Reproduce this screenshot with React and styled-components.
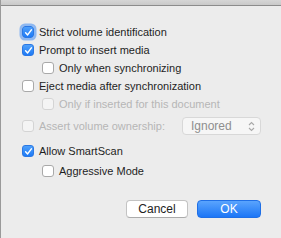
import React, { useState } from 'react';
import styled, { createGlobalStyle, css } from 'styled-components';

const Global = createGlobalStyle`
  html, body {
    margin: 0;
    padding: 0;
    background: #ececec;
  }
  body {
    font-family: "Liberation Sans", Arial, sans-serif;
    font-size: 11px;
    color: #1e1e1e;
  }
`;

const Sheet = styled.div`
  width: 281px;
  height: 238px;
  box-sizing: border-box;
  background: #ececec;
  border-left: 1px solid #9a9a9a;
  display: flex;
  flex-direction: column;
  overflow: hidden;
`;

const TitleStrip = styled.div`
  height: 5px;
  background: linear-gradient(#d6d6d6, #c9c9c9);
  border-bottom: 1px solid #8c8c8c;
  flex-shrink: 0;
`;

const Body = styled.div`
  display: flex;
  flex-direction: column;
  padding: 17px 20px 0 21px;
  flex: 1;
`;

const Row = styled.label`
  display: flex;
  align-items: center;
  height: 18px;
  gap: 5px;
  padding-left: ${p => (p.$indent ? 20 : 0)}px;
  color: ${p => (p.$disabled ? '#b6b6b6' : '#1e1e1e')};
  margin-top: ${p => p.$gap || 0}px;
  white-space: nowrap;
`;

const Box = styled.span`
  width: 12px;
  height: 12px;
  box-sizing: border-box;
  border-radius: 3px;
  flex-shrink: 0;
  display: flex;
  align-items: center;
  justify-content: center;
  ${p =>
    p.$checked
      ? css`
          background: linear-gradient(#4ea0fb, #1e7af5);
          border: 1px solid #2b78e4;
        `
      : css`
          background: ${p.$disabled ? '#f4f4f4' : '#ffffff'};
          border: 1px solid ${p.$disabled ? '#d4d4d4' : '#a9a9a9'};
        `}
  ${p =>
    p.$focus &&
    css`
      box-shadow: 0 0 0 2.5px rgba(80, 150, 245, 0.6);
    `}
`;

const Check = () => (
  <svg width="9" height="9" viewBox="0 0 9 9">
    <path
      d="M1.6 4.8 L3.6 6.9 L7.4 1.9"
      fill="none"
      stroke="#ffffff"
      strokeWidth="1.5"
      strokeLinecap="round"
      strokeLinejoin="round"
    />
  </svg>
);

const SelectBox = styled.div`
  margin-left: auto;
  width: 79px;
  height: 18px;
  box-sizing: border-box;
  border: 1px solid #d8d8d8;
  border-radius: 4px;
  background: #f6f6f6;
  display: flex;
  align-items: center;
  justify-content: space-between;
  padding: 0 5px 0 8px;
  color: #8e8e8e;
  font-size: 12px;
`;

const Footer = styled.div`
  display: flex;
  justify-content: flex-end;
  gap: 9px;
  margin-top: 20px;
`;

const Button = styled.button`
  font-family: inherit;
  font-size: 12px;
  height: 18px;
  box-sizing: border-box;
  border-radius: 4px;
  padding: 0;
  display: flex;
  align-items: center;
  justify-content: center;
  ${p =>
    p.$primary
      ? css`
          width: 64px;
          border: 1px solid #1f6fe6;
          background: linear-gradient(#5aa4fd, #1c76f6);
          color: #ffffff;
        `
      : css`
          width: 62px;
          border: 1px solid #c3c3c3;
          border-bottom-color: #ababab;
          background: #ffffff;
          color: #1e1e1e;
        `}
`;

function Checkbox({ label, checked, disabled, indent, focus, gap, onToggle }) {
  return (
    <Row $indent={indent} $disabled={disabled} $gap={gap} onClick={disabled ? undefined : onToggle}>
      <Box $checked={checked} $disabled={disabled} $focus={focus}>
        {checked && <Check />}
      </Box>
      {label}
    </Row>
  );
}

export default function App() {
  const [v, setV] = useState({
    strict: true,
    prompt: true,
    onlySync: false,
    eject: false,
    onlyDoc: false,
    smart: true,
    aggressive: false,
  });
  const t = k => () => setV(s => ({ ...s, [k]: !s[k] }));

  return (
    <Sheet>
      <Global />
      <TitleStrip />
      <Body>
        <Checkbox label="Strict volume identification" checked={v.strict} focus onToggle={t('strict')} />
        <Checkbox label="Prompt to insert media" checked={v.prompt} onToggle={t('prompt')} />
        <Checkbox label="Only when synchronizing" indent checked={v.onlySync} onToggle={t('onlySync')} />
        <Checkbox label="Eject media after synchronization" checked={v.eject} onToggle={t('eject')} />
        <Checkbox label="Only if inserted for this document" indent disabled checked={v.onlyDoc} />
        <Row $disabled $gap={4}>
          <Box $disabled />
          Assert volume ownership:
          <SelectBox>
            <span>Ignored</span>
            <svg width="7" height="11" viewBox="0 0 7 11">
              <path d="M1 4 L3.5 1.5 L6 4 M1 7 L3.5 9.5 L6 7" fill="none" stroke="#a8a8a8" strokeWidth="1.1" />
            </svg>
          </SelectBox>
        </Row>
        <Checkbox label="Allow SmartScan" gap={7} checked={v.smart} onToggle={t('smart')} />
        <Checkbox label="Aggressive Mode" indent gap={2} checked={v.aggressive} onToggle={t('aggressive')} />
        <Footer>
          <Button>Cancel</Button>
          <Button $primary>OK</Button>
        </Footer>
      </Body>
    </Sheet>
  );
}
